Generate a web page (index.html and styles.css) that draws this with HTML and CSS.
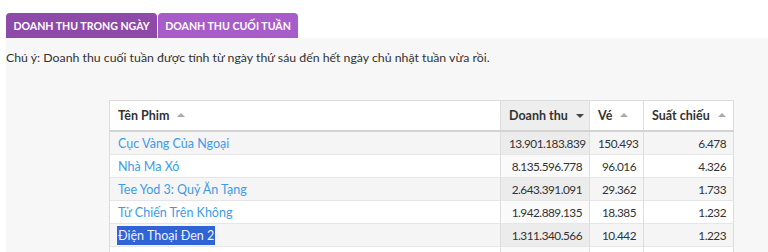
FILE: index.html
```html
<!DOCTYPE html>
<html lang="vi">
<head>
<meta charset="utf-8">
<link rel="stylesheet" href="styles.css">
</head>
<body>
<div class="page">
  <div class="tabs">
    <div class="tab tab-day">DOANH THU TRONG NGÀY</div>
    <div class="tab tab-week">DOANH THU CUỐI TUẦN</div>
  </div>
  <div class="panel">
    <p class="note">Chú ý: Doanh thu cuối tuần được tính từ ngày thứ sáu đến hết ngày chủ nhật tuần vừa rồi.</p>
    <table class="grid">
      <colgroup>
        <col class="c-name"><col class="c-rev"><col class="c-tix"><col class="c-show">
      </colgroup>
      <thead>
        <tr>
          <th>Tên Phim <span class="sort up"></span></th>
          <th class="active">Doanh thu <span class="sort down"></span></th>
          <th>Vé <span class="sort up"></span></th>
          <th>Suất chiếu <span class="sort up"></span></th>
        </tr>
      </thead>
      <tbody>
        <tr class="odd"><td><a>Cục Vàng Của Ngoại</a></td><td class="num rev">13.901.183.839</td><td class="num">150.493</td><td class="num">6.478</td></tr>
        <tr><td><a>Nhà Ma Xó</a></td><td class="num rev">8.135.596.778</td><td class="num">96.016</td><td class="num">4.326</td></tr>
        <tr class="odd"><td><a>Tee Yod 3: Quỷ Ăn Tạng</a></td><td class="num rev">2.643.391.091</td><td class="num">29.362</td><td class="num">1.733</td></tr>
        <tr><td><a>Tử Chiến Trên Không</a></td><td class="num rev">1.942.889.135</td><td class="num">18.385</td><td class="num">1.232</td></tr>
        <tr class="odd"><td><a class="selected">Điện Thoại Đen 2</a></td><td class="num rev">1.311.340.566</td><td class="num">10.442</td><td class="num">1.223</td></tr>
        <tr><td><a>Cô Dâu Hào Môn</a></td><td class="num rev">1.021.554.210</td><td class="num">9.875</td><td class="num">1.104</td></tr>
      </tbody>
    </table>
  </div>
</div>
</body>
</html>
```

FILE: styles.css
```css
html, body {
  margin: 0;
  padding: 0;
  background: #ffffff;
  overflow: hidden;
}
.page {
  padding: 13px 0 0 6px;
  font-family: "Lato", "Noto Sans", sans-serif;
  color: #333333;
}
.tabs {
  display: flex;
  gap: 1px;
}
.tab {
  box-sizing: border-box;
  height: 25px;
  line-height: 26px;
  text-align: center;
  font-size: 10.6px;
  font-weight: 700;
  color: #ffffff;
  white-space: nowrap;
  border-radius: 4px 4px 0 0;
}
.tab-day {
  background: #8e4aa9;
  width: 151px;
}
.tab-week {
  background: #a75cc9;
  width: 140px;
}
.panel {
  background: #f7f7f7;
  padding: 12px 0 20px 0;
  height: 220px;
}
.note {
  margin: 0;
  font-size: 12.3px;
  line-height: 16px;
  color: #333333;
}
.grid {
  margin: 34px 0 0 103px;
  width: 624px;
  table-layout: fixed;
  border-collapse: collapse;
  background: #ffffff;
  font-size: 12.5px;
  border: 1px solid #dddddd;
}
.c-name { width: 391px; }
.c-rev { width: 89px; }
.c-tix { width: 54px; }
.c-show { width: 90px; }
.grid th {
  height: 29px;
  text-align: left;
  font-weight: 700;
  padding: 0 8px;
  border-left: 1px solid #dddddd;
  border-bottom: 2px solid #d3d3d3;
  color: #333333;
  white-space: nowrap;
  overflow: hidden;
}
.grid th.active {
  background: #eeeeee;
}
.grid td {
  height: 22px;
  padding: 0 7px 0 8px;
  border-left: 1px solid #dddddd;
  border-top: 1px solid #e6e6e6;
  white-space: nowrap;
  overflow: hidden;
}
.grid tr.odd td {
  background: #f5f5f5;
}
.grid td.rev {
  background: #fafafa;
}
.grid tr.odd td.rev {
  background: #ececec;
}
.grid td.num {
  text-align: right;
  font-size: 11.8px;
  letter-spacing: -0.5px;
}
.grid a {
  color: #3d9be9;
  text-decoration: none;
}
.grid a.selected {
  background: #2f63d6;
  color: #eef2fb;
  padding: 2px 1px;
  margin-left: -1px;
}
.sort {
  display: inline-block;
  width: 0;
  height: 0;
  margin-left: 5px;
  vertical-align: middle;
  border-left: 4px solid transparent;
  border-right: 4px solid transparent;
}
.sort.up {
  border-bottom: 4px solid #aaaaaa;
  margin-top: -3px;
}
.sort.down {
  border-top: 4px solid #444444;
  margin-top: -1px;
}
```
